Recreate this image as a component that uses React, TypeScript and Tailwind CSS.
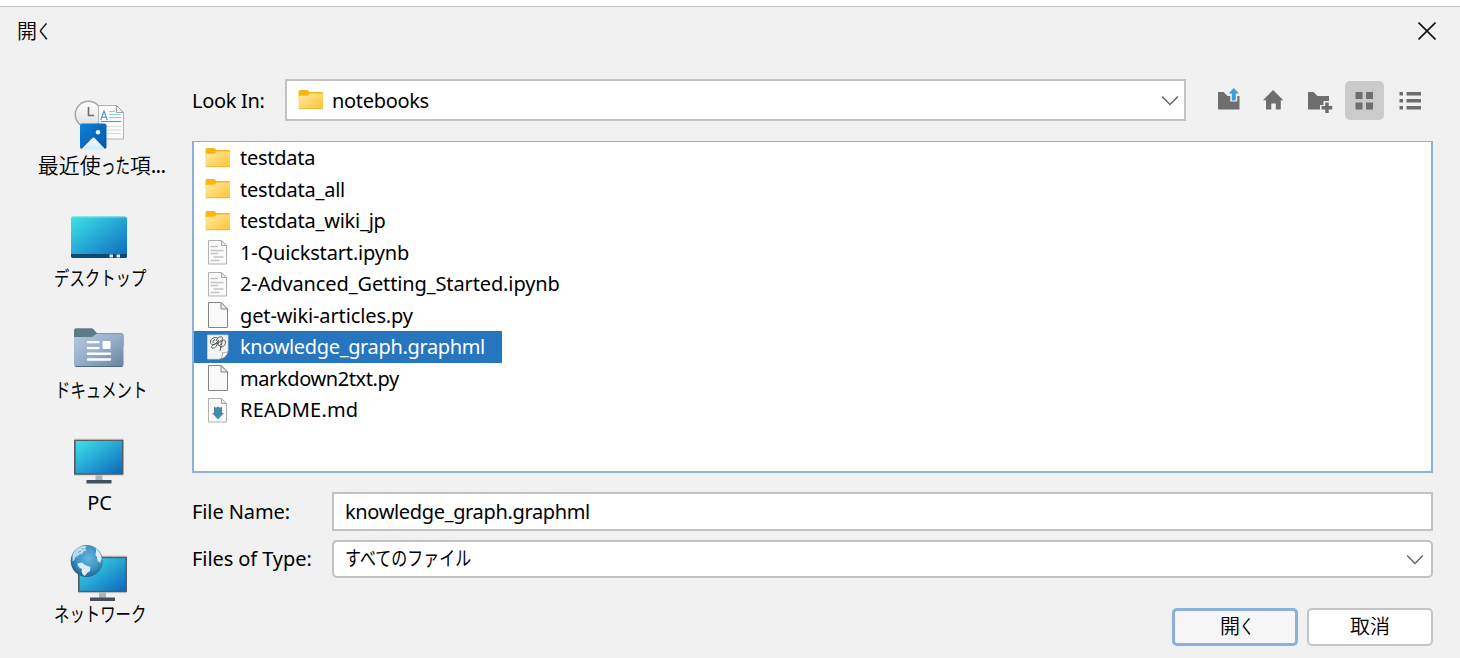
import type { ReactNode } from "react";

function Folder() {
  return (
    <svg width="26" height="22" viewBox="0 0 26 22" className="shrink-0">
      <defs>
        <linearGradient id="fold" x1="0" y1="0" x2="1" y2="1">
          <stop offset="0" stopColor="#ffe9a6" />
          <stop offset="1" stopColor="#ffc533" />
        </linearGradient>
      </defs>
      <path d="M.5 2.500Q.5 1 2 1h6.500q1 0 1.700.8L11.500 3H24q1 0 1 1V10H.5z" fill="#f9b517" />
      <path d="M.5 6.700h8q1.200 0 2-.9l1.200-1.300H25v14q0 1.500-1.500 1.500H2Q.5 20 .5 18.500z" fill="url(#fold)" />
      <path d="M1 19.700h24" stroke="#e5ad3a" strokeWidth=".8" />
    </svg>
  );
}

function FileIcon({ kind }: { kind: string }) {
  if (kind === "folder") return <Folder />;
  if (kind === "graph")
    return (
      <svg width="26" height="28" viewBox="0 0 26 28" className="shrink-0">
        <path d="M2.500 2h20.500v16.500L15 26H2.500z" fill="#f4f4f4" stroke="#d0d0d0" strokeWidth=".8" />
        <path d="M23 18.500c-2 1.500-4 1.500-5.500 1 .3 2.500-.5 5-2 6.500 4-1 7-4 7.500-7.500z" fill="#fff" stroke="#888" strokeWidth=".7" />
        <g fill="none" stroke="#444" strokeWidth=".9">
          <path d="M13 5.500C10 3 5 5.500 5.500 9.500c.5 3.500 5 3 8-2.500-1 5-3 9-6.500 8-2-1 1-4 6.500-5" />
          <path d="M11 8c1-3 4-5 6-4 1.700 1-.5 4-4 6M17.500 7c-1 3.500-1.500 7-2.500 11M15.500 9.500c1.500-3 5-3.500 5-.5 0 3.500-3 6-5.500 4.500M10 6.500c-1.500.5-2.500 2-2 3.500M13.500 10.500c-1 3 1.500 3 2.500 0" />
        </g>
      </svg>
    );
  return (
    <svg width="26" height="28" viewBox="0 0 26 28" className="shrink-0">
      <g transform="translate(1 0)">
        {kind === "page" ? (
          <>
            <path d="M2.500 1.500h12.500L21.500 8v18.500h-19z" fill="#fafafa" stroke="#858585" />
            <path d="M15 1.500V8h6.500z" fill="#eee" stroke="#858585" />
          </>
        ) : (
          <>
            <path d="M2.500 2.500h13L20.500 7.500v18.500h-18z" fill="#fafafa" stroke="#b0b0b0" />
            <path d="M15.500 2.500v5h5z" fill="#eee" stroke="#a4a4a4" />
          </>
        )}
        {kind === "text" && <path d="M4.500 8.500h7.500M4.500 12.500h13M4.500 15.500h7.500M7.500 19h10M4.500 22.500h9" stroke="#c2c6c8" strokeWidth="1.400" fill="none" />}
        {kind === "md" && <path d="M8 10.500l2 1.300 2-1.300 2 1.300 2-1.300V17h2L12 23.500 6 17h2z" fill="#468ca8" />}
      </g>
    </svg>
  );
}

function ScreenGradient({ id }: { id: string }) {
  return (
    <defs>
      <linearGradient id={id} x1="0" y1="0" x2="1" y2="1">
        <stop offset="0" stopColor="#3fe3e6" />
        <stop offset=".5" stopColor="#25a5d5" />
        <stop offset="1" stopColor="#0b68bd" />
      </linearGradient>
    </defs>
  );
}

function RecentIcon() {
  return (
    <svg width="64" height="64" viewBox="0 0 64 64">
      <defs>
        <linearGradient id="clk" x1="0" y1="0" x2="0" y2="1"><stop stopColor="#fff" /><stop offset="1" stopColor="#dedede" /></linearGradient>
        <linearGradient id="pic" x1="0" y1="0" x2="1" y2="1"><stop stopColor="#0c83dc" /><stop offset="1" stopColor="#0852a4" /></linearGradient>
        <linearGradient id="mtn" x1="0" y1="0" x2="0" y2="1"><stop stopColor="#fff" /><stop offset="1" stopColor="#cdeaff" /></linearGradient>
      </defs>
      <circle cx="21.500" cy="22.500" r="13.200" fill="url(#clk)" stroke="#a6a6a6" strokeWidth="1.500" />
      <path d="M21.500 15v8.500h5.500" fill="none" stroke="#6d6d6d" strokeWidth="1.600" />
      <path d="M31.500 13.500h18l7 7v26.500h-25z" fill="#fbfbfb" stroke="#b4b4b4" />
      <path d="M49.500 13.500v7h7z" fill="#eee" stroke="#999" strokeWidth=".9" />
      <path d="M33.700 28l3.300-9 3.300 9M34.800 25.200h4.400" fill="none" stroke="#3f8fd4" strokeWidth="1.100" />
      <path d="M42 19.500h6M42 22.500h12M42 25.500h12" stroke="#83d3f0" strokeWidth="1.200" />
      <path d="M34 29.500h20" stroke="#4b9bd8" strokeWidth="1.100" />
      <path d="M34 34.500h20M34 38h20M34 41.500h20" stroke="#dadada" />
      <rect x="13" y="31.500" width="26.500" height="25.500" rx="2" fill="url(#pic)" />
      <path d="M14 57.500L25.500 46q1-.8 2 0L38.500 57.500z" fill="url(#mtn)" />
      <circle cx="31" cy="40.300" r="2.200" fill="#eef9ff" />
    </svg>
  );
}

function DesktopIcon() {
  return (
    <svg width="64" height="64" viewBox="0 0 64 64">
      <ScreenGradient id="desk" />
      <rect x="4" y="12.500" width="56" height="41.500" rx="2" fill="url(#desk)" />
      <path d="M4 50h56v2q0 2-2 2H6q-2 0-2-2z" fill="#0b4973" />
      <path d="M5 13h54" stroke="#78e6ec" strokeWidth=".9" />
      <path d="M42.500 50.500h3.500v3h-3.500zM49.500 50.500h3.500v3h-3.500z" fill="#d4eaf5" />
    </svg>
  );
}

function DocumentsIcon() {
  return (
    <svg width="64" height="64" viewBox="0 0 64 64">
      <defs>
        <linearGradient id="docs" x1="0" y1="0" x2="1" y2="1"><stop stopColor="#b6c8de" /><stop offset=".5" stopColor="#95adc9" /><stop offset="1" stopColor="#66819f" /></linearGradient>
      </defs>
      <g transform="translate(.5 .8)">
        <path d="M6.500 13.500q0-2 2-2h15q1.500 0 2.500 1l3.500 4H54q2 0 2 2V30H6.500z" fill="#5d7b86" />
        <path d="M6.500 20.200h17q1.500 0 2.500-1l2.500-2H54q2 0 2 2v28q0 3-2 3H8.500q-2 0-2-3z" fill="url(#docs)" />
        <path d="M8 49.700h46.500" stroke="#4c6788" />
        <path d="M20.500 25.300h10.500M20.500 31.300h10.500M20.500 37h22M20.500 42.700h22" stroke="#fff" strokeWidth="2.400" strokeLinecap="round" />
        <rect x="35" y="24.300" width="8" height="8" rx="1" fill="#fff" />
      </g>
    </svg>
  );
}

function PcIcon() {
  return (
    <svg width="64" height="64" viewBox="0 0 64 64">
      <ScreenGradient id="pc" />
      <path d="M28.500 46h7v7h-7z" fill="#aab4be" />
      <rect x="7" y="11.500" width="49.500" height="35.500" rx="1" fill="#565c62" />
      <rect x="8.700" y="13" width="46.300" height="32.200" fill="url(#pc)" />
      <path d="M7 11h49.500M7 47.200h49.500" stroke="#c6c6c6" strokeWidth=".8" />
      <path d="M19.500 52h25v3.500h-25z" fill="#44505c" />
    </svg>
  );
}

function NetworkIcon() {
  return (
    <svg width="64" height="64" viewBox="0 0 64 64">
      <ScreenGradient id="net" />
      <defs>
        <radialGradient id="globe" cx=".55" cy=".4" r=".65"><stop stopColor="#62b8e2" /><stop offset=".6" stopColor="#3a8fc0" /><stop offset="1" stopColor="#1d5680" /></radialGradient>
      </defs>
      <path d="M32 51h7v7h-7z" fill="#aab4be" />
      <rect x="11" y="16.500" width="49" height="36" rx="1" fill="#565c62" />
      <rect x="12.700" y="18.200" width="45.800" height="32.600" fill="url(#net)" />
      <path d="M11 16h49M11 52.700h49" stroke="#c6c6c6" strokeWidth=".8" />
      <path d="M23 57.500h25V61H23z" fill="#44505c" />
      <circle cx="19.700" cy="21" r="16" fill="url(#globe)" />
      <g fill="#dceff8">
        <path d="M5.500 15c2-5 6-8.200 11-9.200l3.500.7-2 2 1.500 2-3 1-1.500 2.500-3 .5-1.500 3-2-.5-1 3-2 1.500z" opacity=".8" />
        <path d="M10.500 23.500l4.500-1 3 2.500 5.500 2-.5 4-3 2-2 3c-3-1.500-4-4.500-3-7-3-1-4.500-3-4.500-5.500z" />
        <path d="M29 8.500c3 2.500 5.200 6 5.700 10l-1.500 4.500-2.700-2-.5-4-1.500-2 .5-3z" />
      </g>
      <path d="M11 12.500l3-1.500M9 16l2 1M15 8.500l2 1" stroke="#5aaad3" strokeWidth="1" />
    </svg>
  );
}

/* Condensed kana set in a box of its narrowed width. */
function Kana({ children, box, squeeze }: { children: string; box: string; squeeze: string }) {
  return (
    <span className={`inline-flex ${box}`}>
      <span className={`origin-left font-normal whitespace-nowrap ${squeeze}`}>{children}</span>
    </span>
  );
}

function Open() {
  return (
    <span className="flex text-[20px]">
      開<Kana box="w-[14px]" squeeze="scale-x-[.7]">く</Kana>
    </span>
  );
}

function Place({ icon, children }: { icon: ReactNode; children: ReactNode }) {
  return (
    <button className="flex h-[112px] w-full flex-col items-center">
      {icon}
      <span className="-mt-[4px] flex h-[30px] items-center whitespace-nowrap">{children}</span>
    </button>
  );
}

function Chevron() {
  return (
    <svg width="18" height="12" viewBox="0 0 18 12" className="mt-[2px]">
      <path d="M1.200 1.500L9 9.500l7.800-8" fill="none" stroke="#666" strokeWidth="1.500" />
    </svg>
  );
}

function Toolbar() {
  return (
    <div className="ml-[22px] flex items-center gap-[6.660px] text-[#6e6e6e]">
      <button className="grid size-[39px] place-items-center">
        <svg width="26" height="26" viewBox="0 0 26 26" fill="currentColor">
          <path d="M3 5h5.500l4 4h2.800v5.500h7V9H24.500v13.500H3z" />
          <path d="M18.800 1l5.200 5.500h-3.200v7h-4v-7h-3.200z" fill="#369fdc" />
        </svg>
      </button>
      <button className="grid size-[39px] place-items-center">
        <svg width="26" height="26" viewBox="0 0 26 26" fill="currentColor">
          <path d="M13 3L23.300 13.200h-2.500v9.300h-5v-6h-4.500v6H6v-9.300H3z" />
        </svg>
      </button>
      <button className="grid size-[39px] place-items-center">
        <svg width="28" height="26" viewBox="0 0 28 26" fill="currentColor">
          <path d="M3 5h5.500l4 4H24v5h-5.500v4h-3.500v4.500H3z" />
          <path d="M20.200 15.500h3.500V19H27.200v3.500h-3.500V26h-3.500v-3.500h-3.700V19h3.700z" />
        </svg>
      </button>
      <button className="grid size-[39px] place-items-center rounded-[5px] bg-[#cbcbcb]">
        <svg width="26" height="26" viewBox="0 0 26 26" fill="currentColor">
          <path d="M4.500 5h7v7h-7zM15 5h7v7h-7zM4.500 15.500h7v7h-7zM15 15.500h7v7h-7z" />
        </svg>
      </button>
      <button className="grid size-[39px] place-items-center">
        <svg width="26" height="26" viewBox="0 0 26 26" fill="currentColor">
          <path d="M2.500 5h3.500v3.500H2.500zM9.500 5H24v3.500H9.500zM2.500 12h3.500v3.500H2.500zM9.500 12H24v3.500H9.500zM2.500 19h3.500v3.500H2.500zM9.500 19H24v3.500H9.500z" />
        </svg>
      </button>
    </div>
  );
}

const files = [
  { kind: "folder", name: "testdata", tracking: "tracking-[-.27px]" },
  { kind: "folder", name: "testdata_all", tracking: "tracking-[-.22px]" },
  { kind: "folder", name: "testdata_wiki_jp", tracking: "tracking-[-.22px]" },
  { kind: "text", name: "1-Quickstart.ipynb", tracking: "tracking-[-.16px]" },
  { kind: "text", name: "2-Advanced_Getting_Started.ipynb", tracking: "tracking-[-.12px]" },
  { kind: "page", name: "get-wiki-articles.py", tracking: "tracking-[-.12px]" },
  { kind: "graph", name: "knowledge_graph.graphml", tracking: "tracking-[-.35px]" },
  { kind: "page", name: "markdown2txt.py", tracking: "tracking-[-.4px]" },
  { kind: "md", name: "README.md", tracking: "tracking-[.2px]" },
];

export default function App() {
  return (
    <div className="flex h-[658px] w-[1460px] flex-col overflow-hidden bg-[#f1f1f1] font-['Noto_Sans','Noto_Sans_CJK_JP',sans-serif] text-[20px] leading-none text-black">
      <div className="h-[7px] shrink-0 border-b border-[#c3c3c3] bg-white" />
      <header className="flex h-[48px] shrink-0 items-center justify-between pr-[24px] pl-[17px]">
        <h1 className="font-['Noto_Sans_CJK_JP',sans-serif] font-[350]"><Open /></h1>
        <svg width="18" height="18" viewBox="0 0 18 18"><path d="M.5.500l17 17M17.500.500l-17 17" stroke="#111" strokeWidth="1.600" /></svg>
      </header>
      <main className="flex flex-1">
        <aside className="flex w-[192px] shrink-0 flex-col pt-[37px] pl-[6px] font-[350]">
          <Place icon={<RecentIcon />}>
            <span className="mb-[3px] ml-[5px] flex text-[21px]">
              最近使<Kana box="w-[29px]" squeeze="scale-x-[.69]">った</Kana>項<span className="font-normal tracking-[-.8px]">...</span>
            </span>
          </Place>
          <Place icon={<DesktopIcon />}><span className="ml-px flex"><Kana box="w-[92px]" squeeze="scale-x-[.77]">デスクトップ</Kana></span></Place>
          <Place icon={<DocumentsIcon />}><span className="ml-[4px] flex"><Kana box="w-[92px]" squeeze="scale-x-[.77]">ドキュメント</Kana></span></Place>
          <Place icon={<PcIcon />}><span className="ml-px font-normal">PC</span></Place>
          <Place icon={<NetworkIcon />}><span className="ml-px flex"><Kana box="w-[92px]" squeeze="scale-x-[.77]">ネットワーク</Kana></span></Place>
        </aside>
        <section className="flex w-[1241px] shrink-0 flex-col pt-[24px]">
          <div className="flex h-[42px] items-center">
            <span className="w-[93px] shrink-0 pt-[2px] tracking-[-.3px]">Look In:</span>
            <div className="flex h-[42px] w-[901px] shrink-0 items-center justify-between border-2 border-[#c2c2c2] bg-white pr-[5px] pl-[11px]">
              <span className="flex items-center gap-[8px]"><Folder /><span className="pt-[2px] tracking-[-.32px]">notebooks</span></span>
              <Chevron />
            </div>
            <Toolbar />
          </div>
          <ul className="mt-[20px] flex h-[332px] flex-col border-2 border-t border-[#8bb1db] bg-white">
            {files.map((f) => (
              <li key={f.name} className={`flex h-[31.500px] w-fit items-center gap-[9px] pr-[17px] pl-[11px] ${f.kind === "graph" ? "bg-[#2675bf] text-white" : ""}`}>
                <FileIcon kind={f.kind} />
                <span className={`pt-px ${f.tracking}`}>{f.name}</span>
              </li>
            ))}
          </ul>
          <div className="mt-[19px] flex h-[39px] items-center">
            <label className="w-[140px] tracking-[-.1px]">File Name:</label>
            <div className="flex h-[39px] w-[1101px] items-center border-2 border-[#c2c2c2] bg-white pl-[11px] tracking-[-.35px]">knowledge_graph.graphml</div>
          </div>
          <div className="mt-[9px] flex h-[38px] items-center">
            <label className="w-[140px] tracking-[-.08px]">Files of Type:</label>
            <div className="flex h-[38px] w-[1101px] items-center justify-between rounded-[5px] border-2 border-[#c2c2c2] bg-white pr-[7px] pl-[11px]">
              <span className="flex"><Kana box="w-[126px]" squeeze="scale-x-[.8]">すべてのファイル</Kana></span>
              <Chevron />
            </div>
          </div>
          <div className="mt-[30px] flex justify-end gap-[9px] font-[350]">
            <button className="flex h-[38px] w-[126px] items-center justify-center rounded-[5px] border-3 border-[#8bb1db] bg-[#f6f6f6] pl-[4px] outline-none"><Open /></button>
            <button className="flex h-[38px] w-[126px] items-center justify-center rounded-[5px] border-2 border-[#c4c4c4] bg-white text-[20px]">取消</button>
          </div>
        </section>
      </main>
    </div>
  );
}
